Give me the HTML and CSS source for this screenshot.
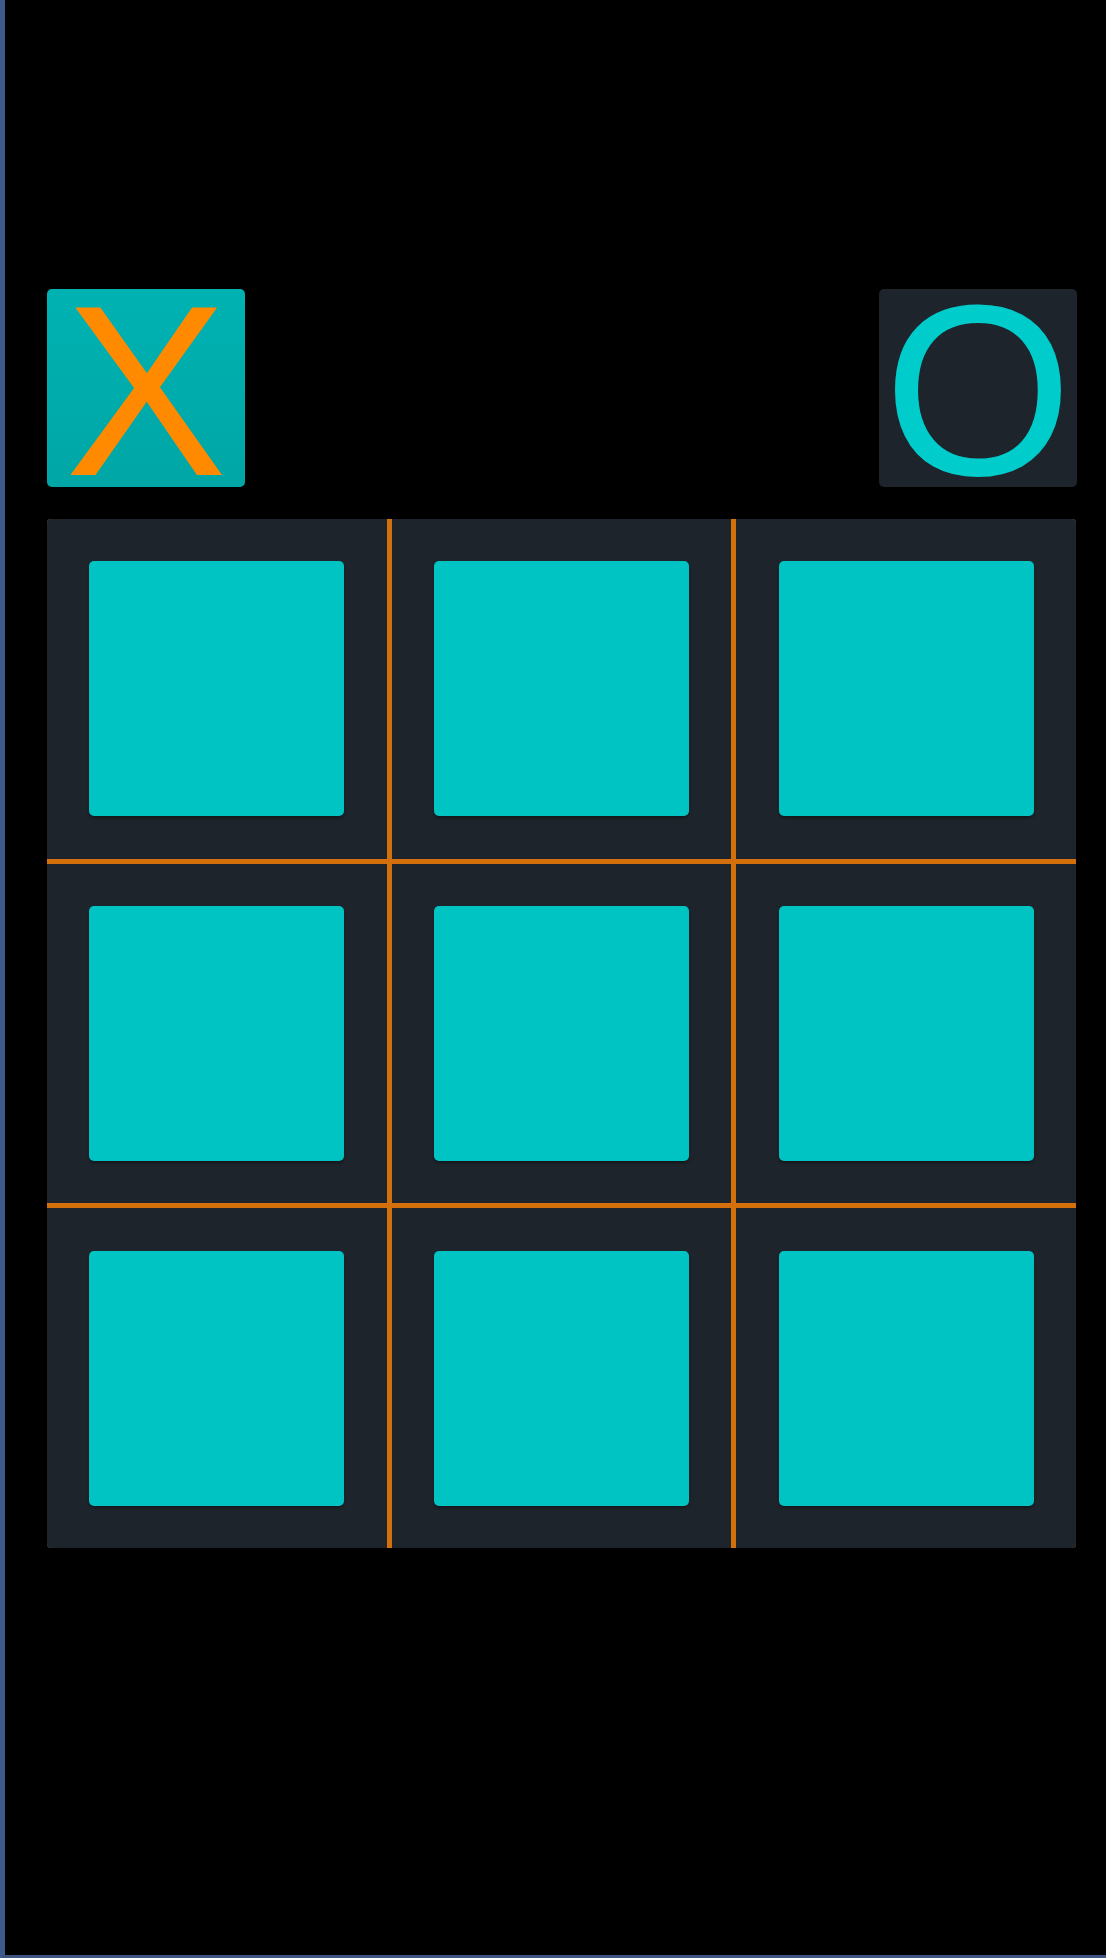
FILE: index.html
```html
<!DOCTYPE html>
<html lang="en">
<head>
<meta charset="utf-8">
<title>Tic Tac Toe</title>
<link rel="stylesheet" href="styles.css">
</head>
<body>
<div class="screen">
  <div class="players">
    <div class="player player-x"><span class="mark">X</span></div>
    <div class="player player-o"><span class="mark">O</span></div>
  </div>
  <div class="board">
    <div class="cell"><div class="tile"></div></div>
    <div class="cell"><div class="tile"></div></div>
    <div class="cell"><div class="tile"></div></div>
    <div class="cell"><div class="tile"></div></div>
    <div class="cell"><div class="tile"></div></div>
    <div class="cell"><div class="tile"></div></div>
    <div class="cell"><div class="tile"></div></div>
    <div class="cell"><div class="tile"></div></div>
    <div class="cell"><div class="tile"></div></div>
  </div>
</div>
</body>
</html>
```
FILE: styles.css
```css
* { box-sizing: border-box; }
html, body {
  margin: 0;
  padding: 0;
  background: #000;
}
.screen {
  width: 1106px;
  height: 1958px;
  background: #000;
  border-left: 5px solid #3c5a8c;
  border-bottom: 3px solid #3d5580;
  padding: 289px 29px 0 42px;
  display: flex;
  flex-direction: column;
  gap: 32px;
  font-family: "Liberation Sans", Arial, sans-serif;
}
.players {
  display: flex;
  justify-content: space-between;
  height: 198px;
}
.player {
  width: 198px;
  height: 198px;
  border-radius: 5px;
  display: flex;
  align-items: center;
  justify-content: center;
}
.player-x {
  background: linear-gradient(#00b2b2, #00a6a6);
  padding-top: 5px;
}
.player-o {
  background: #1d242b;
  padding-top: 5px;
}
.mark {
  display: inline-block;
  line-height: 1;
  font-size: 243px;
}
.player-x .mark {
  color: #ff8a00;
}
.player-o .mark {
  color: #00cccc;
}
.board {
  width: 1029px;
  height: 1029px;
  display: grid;
  grid-template-columns: repeat(3, 1fr);
  grid-template-rows: repeat(3, 1fr);
  gap: 5px;
  background: #d4700c;
  border-radius: 4px;
  overflow: hidden;
}
.cell {
  background: #1d242b;
  display: flex;
  align-items: center;
  justify-content: center;
}
.tile {
  width: 255px;
  height: 255px;
  background: #00c4c4;
  border-radius: 5px;
  box-shadow: 0 2px 3px rgba(0, 0, 0, 0.35);
}
```
